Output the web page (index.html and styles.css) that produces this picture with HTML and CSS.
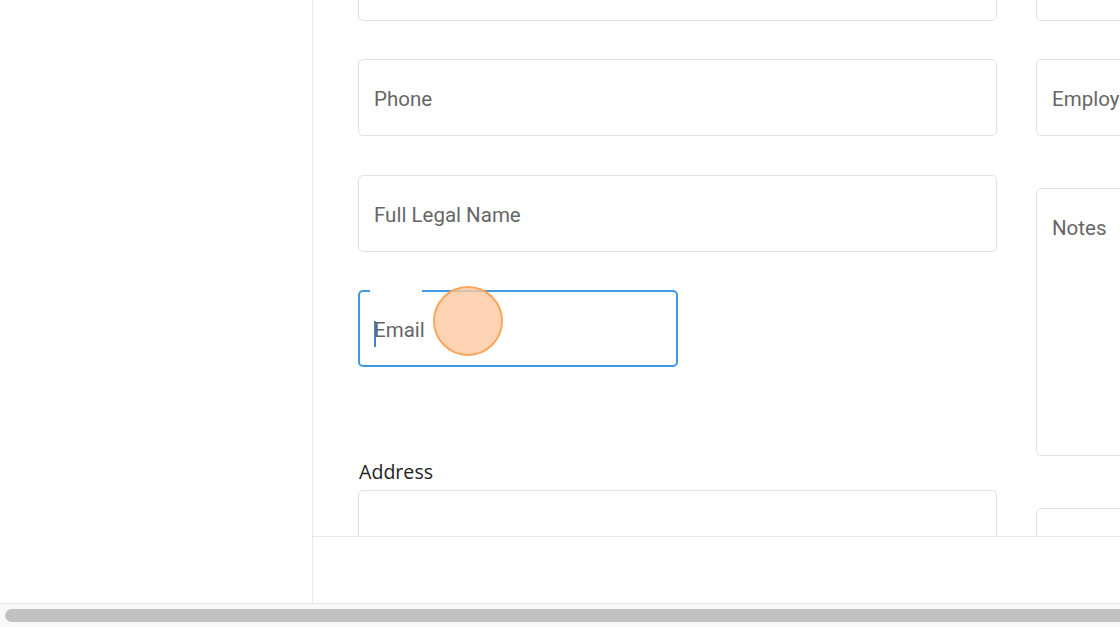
FILE: index.html
```html
<!DOCTYPE html>
<html lang="en">
<head>
    <meta charset="UTF-8">
    <meta name="viewport" content="width=device-width, initial-scale=1.0">
    <title>Contact form</title>
    <link rel="stylesheet" href="styles.css">
</head>
<body>
    <div class="page">
        <!-- sidebar -->
        <div class="sidebar"></div>

        <!-- main area -->
        <div class="main">
            <div class="content">
                <div class="form">
                    <div class="col">
                        <div class="field"></div>
                        <div class="field"><span class="hint">Phone</span></div>
                        <div class="field"><span class="hint">Full Legal Name</span></div>
                        <div class="field half focused">
                            <span class="caret"></span><span class="hint">Email</span>
                            <span class="touch"></span>
                        </div>
                        <label class="label">Address</label>
                        <div class="field tall"></div>
                    </div>
                    <div class="col right">
                        <div class="field"></div>
                        <div class="field"><span class="hint">Employer</span></div>
                        <div class="field notes"><span class="hint">Notes</span></div>
                        <div class="field tall"></div>
                    </div>
                </div>
            </div>
            <div class="footer"></div>
        </div>
    </div>

    <!-- horizontal scrollbar -->
    <div class="scrollbar">
        <div class="thumb"></div>
    </div>
</body>
</html>
```

FILE: styles.css
```css
* {
    margin: 0;
    padding: 0;
    box-sizing: border-box;
}

body {
    font-family: Roboto, 'Liberation Sans', sans-serif;
    background: #fff;
    width: 1120px;
    height: 627px;
    overflow: hidden;
}

.page {
    display: flex;
    height: 604px;
    border-bottom: 1px solid #e6e6e6;
}

.sidebar {
    width: 313px;
    flex-shrink: 0;
    border-right: 1px solid #e8e8e8;
}

.main {
    flex: 1;
    display: flex;
    flex-direction: column;
    overflow: hidden;
}

.content {
    height: 536px;
    overflow: hidden;
    padding-left: 45px;
}

.footer {
    flex: 1;
    border-top: 1px solid #e8e8e8;
}

.form {
    display: flex;
    gap: 39px;
    margin-top: -56px;
    width: 1317px;
}

.col {
    width: 639px;
    display: flex;
    flex-direction: column;
}

.field {
    position: relative;
    height: 77px;
    border: 1px solid #e2e2e2;
    border-radius: 5px;
    display: flex;
    align-items: center;
    padding: 3px 0 0 15px;
    margin-bottom: 38px;
    flex-shrink: 0;
}

.col .field:nth-child(2) {
    margin-bottom: 39px;
}

.hint {
    font-size: 20.5px;
    color: #666;
    white-space: nowrap;
}

.half {
    width: 320px;
}

.focused {
    border: 2px solid #4299e1;
    padding-left: 14px;
    margin-bottom: 94px;
}

.focused::before {
    content: '';
    position: absolute;
    top: -2px;
    left: 10px;
    width: 52px;
    height: 2px;
    background: #fff;
}

.caret {
    display: inline-block;
    width: 2px;
    height: 26px;
    background: #4a7fd0;
    margin-top: 7px;
    margin-right: -2px;
}

.touch {
    position: absolute;
    left: 73px;
    top: -6px;
    width: 70px;
    height: 70px;
    border-radius: 50%;
    background: rgba(252, 200, 160, 0.8);
    border: 2px solid #fba55a;
}

.label {
    font-family: 'Open Sans', Lato, sans-serif;
    font-size: 19.6px;
    line-height: 22px;
    color: #222;
    padding-left: 1px;
    margin-bottom: 7px;
}

.tall {
    height: 120px;
}

.right .field:nth-child(2) {
    margin-bottom: 52px;
}

.notes {
    height: 268px;
    align-items: flex-start;
    padding-top: 27px;
    margin-bottom: 52px;
}

.scrollbar {
    height: 23px;
    background: #f8f8f8;
    padding: 5px 0 0 5px;
}

.thumb {
    height: 13px;
    width: 1130px;
    background: #c1c1c1;
    border-radius: 7px;
}
```
